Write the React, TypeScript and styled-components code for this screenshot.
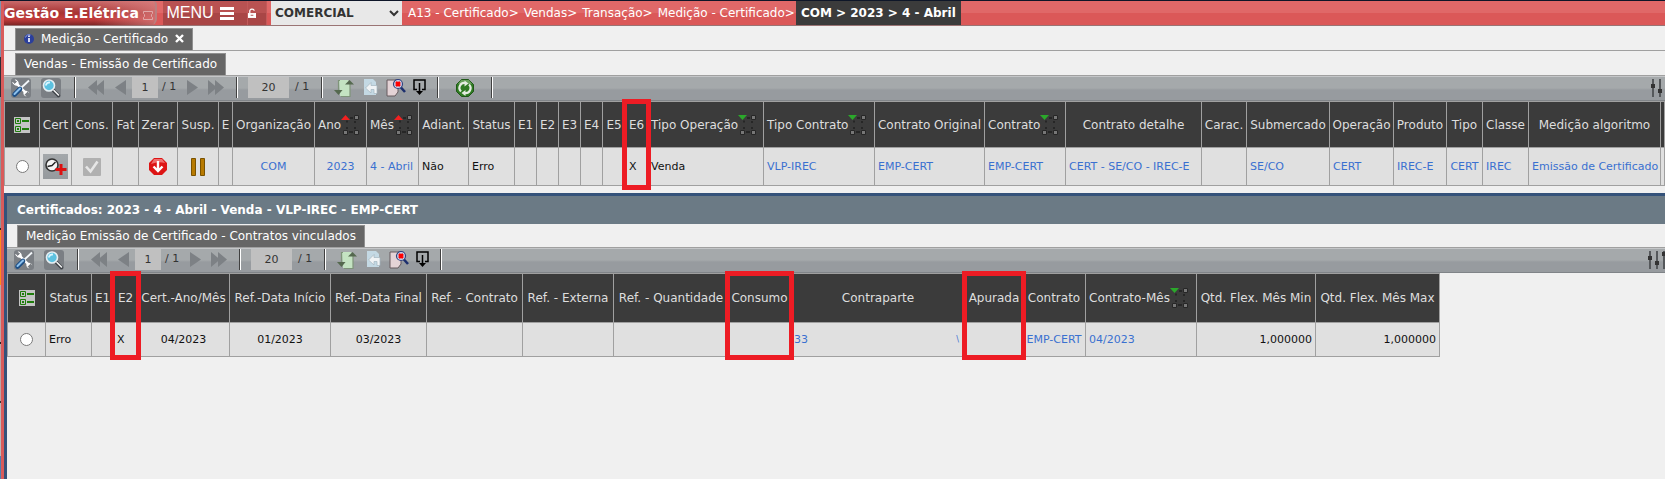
import React from 'react';
import styled, { createGlobalStyle } from 'styled-components';

const GlobalStyle = createGlobalStyle`
  * { box-sizing: border-box; }
  body {
    margin: 0;
    background: #f0f0f0;
    font-family: 'DejaVu Sans', Verdana, sans-serif;
    font-size: 12px;
  }
  button, input, select { font-family: inherit; margin: 0; }
  button { border: 0; padding: 0; background: none; cursor: pointer; }
  a { text-decoration: none; }
`;

const LINE = '#a0a0a0';

const Page = styled.div`
  display: flex;
  min-height: 100vh;
  overflow: hidden;
  border-top: 1px solid #0e1628;
`;

const DesktopEdge = styled.div`
  flex: none;
  width: 1px;
  background: linear-gradient(
    #7f93ad 0 56px, #2c2f36 56px 96px, #8f9499 96px 227px, #222 227px 229px,
    #ff8c1a 229px 284px, #b9a7a7 284px 341px, #222 341px 343px,
    #b9a7a7 343px 400px, #333 400px 402px, #b9b9b9 402px 455px, #4f7fb0 455px
  );
`;

const Frame = styled.div`
  flex: 1;
  min-width: 0;
  display: flex;
  flex-direction: column;
  border-left: 3px solid #d95b5b;
`;

const NavBar = styled.nav`
  display: flex;
  height: 25px;
  background: linear-gradient(#e06868 0 12px, #db5858 12px);
  border-bottom: 1px solid #9a7474;
`;

const Brand = styled.div`
  display: flex;
  align-items: center;
  gap: 4px;
  width: 153px;
  margin-right: 6px;
  color: #fff;
  font-size: 14px;
  font-weight: bold;
  white-space: nowrap;
  border-right: 2px solid #b98080;
  border-radius: 0 4px 6px 0;
  background:
    linear-gradient(90deg, rgba(120, 20, 20, 0) 60%, rgba(220, 130, 130, 0.7)),
    linear-gradient(#c96a6a, #a83232 50%, #c43c3c 75%, #7e2626);
  svg { margin-top: 5px; }
`;

const NavButton = styled.button<{ $width: number }>`
  display: flex;
  align-items: center;
  justify-content: center;
  gap: 6px;
  width: ${(p) => p.$width}px;
  padding-right: 10px;
  color: #fff;
  font-family: 'Liberation Sans', Arial, sans-serif;
  font-size: 16px;
  background: linear-gradient(#b95252 0 12px, #a94646 12px);
  border-right: 1px solid #c25a5a;
`;

const CompanySelect = styled.select`
  width: 131px;
  margin: 0 1px 0 4px;
  border: 0;
  border-radius: 0;
  background: #e8e8e8;
  color: #333;
  font-size: 12px;
  font-weight: bold;
`;

const Crumbs = styled.div`
  display: flex;
  align-items: center;
  gap: 5px;
  padding: 0 1px 0 5px;
  a { color: #fff; white-space: nowrap; }
`;

const CurrentCrumb = styled.span`
  display: flex;
  align-items: center;
  padding: 0 5px;
  color: #fff;
  font-weight: bold;
  white-space: nowrap;
  background: #3b3b3b;
`;

const TabRow = styled.div<{ $height: number; $indent: number; $line?: boolean }>`
  display: flex;
  align-items: flex-end;
  height: ${(p) => p.$height}px;
  padding-left: ${(p) => p.$indent}px;
  border-bottom: ${(p) => (p.$line ? `1px solid ${LINE}` : '0')};
`;

const Tab = styled.button`
  display: flex;
  align-items: center;
  gap: 7px;
  height: 22px;
  padding: 0 8px 2px;
  color: #fff;
  font-size: 12px;
  white-space: nowrap;
  background: #666;
  border: 1px solid #909090;
  border-bottom: 0;
`;

const Bar = styled.div<{ $bleed: number }>`
  display: flex;
  align-items: center;
  height: 26px;
  padding-left: 2px;
  padding-bottom: 1px;
  overflow: hidden;
  border-top: 1px solid ${LINE};
  border-bottom: 1px solid #808488;
  background: linear-gradient(#c4c6c8 0 1px, #a5a9ab 1px 12px, #979b9f 14px);
  > :last-child { margin-left: auto; margin-right: -${(p) => p.$bleed}px; }
`;

const ToolButton = styled.button<{ $width: number }>`
  flex: none;
  display: flex;
  align-items: center;
  justify-content: center;
  width: ${(p) => p.$width}px;
  height: 22px;
`;

const Divider = styled.span`
  flex: none;
  width: 2px;
  height: 21px;
  margin: 0 8px;
  border-left: 1px solid #404040;
  border-right: 1px solid #fff;
`;

const PageInput = styled.input<{ $wide?: boolean }>`
  flex: none;
  width: ${(p) => (p.$wide ? 41 : 26)}px;
  height: 21px;
  margin: 0 ${(p) => (p.$wide ? 2 : 0)}px;
  padding: 0;
  border: 0;
  background: #c0c0c0;
  color: #333;
  font-size: 11px;
  text-align: center;
`;

const Total = styled.span`
  flex: none;
  width: 22px;
  padding-left: 4px;
  padding-bottom: 2px;
  color: #333;
  font-size: 11px;
  white-space: nowrap;
`;

const Grid = styled.table<{ $fill?: boolean }>`
  table-layout: fixed;
  width: ${(p) => (p.$fill ? '100%' : '0')};
  border-spacing: 0;
  border-left: 1px solid ${LINE};
  border-top: 1px solid ${LINE};
`;

type Align = 'left' | 'center' | 'right';

const HeadCell = styled.th<{ $height: number; $align: Align }>`
  position: relative;
  height: ${(p) => p.$height}px;
  padding: 0 ${(p) => (p.$align === 'left' ? 3 : 0)}px;
  background: #3b3b3b;
  color: #dedede;
  font-weight: normal;
  text-align: ${(p) => p.$align};
  white-space: nowrap;
  border-right: 1px solid ${LINE};
  border-bottom: 1px solid ${LINE};
`;

const HeadLabel = styled.span`
  display: inline-flex;
  align-items: center;
  vertical-align: middle;
`;

const Cell = styled.td<{ $height: number; $align: Align; $pad: boolean }>`
  height: ${(p) => p.$height}px;
  padding: 0 ${(p) => (p.$pad ? 3 : 0)}px;
  background: #e0e0e0;
  color: #111;
  font-size: 11px;
  text-align: ${(p) => p.$align};
  white-space: nowrap;
  border-right: 1px solid ${LINE};
  border-bottom: 1px solid ${LINE};
  a { color: #3a70d0; }
  input { display: block; margin: 0 auto; width: 13px; height: 13px; }
  svg, button { display: block; margin: 0 auto; }
`;

const Highlight = styled.span<{ $height: number }>`
  position: absolute;
  z-index: 1;
  top: -3px;
  left: -4px;
  right: -4px;
  height: ${(p) => p.$height}px;
  border: 5px solid #ed1c24;
  pointer-events: none;
`;

const Window = styled.section`
  flex: 1;
  margin-top: 7px;
  border-left: 3px solid #34527a;
  border-top: 3px solid #34527a;
`;

const WindowTitle = styled.h2`
  display: flex;
  align-items: center;
  height: 28px;
  margin: 0;
  padding: 0 10px;
  background: #6b7a85;
  color: #fff;
  font-size: 12px;
`;

const Split = styled.div`
  display: flex;
  align-items: center;
  justify-content: space-between;
`;

const Fragment = styled.a`
  padding-right: 3px;
  font-size: 8px;
`;

const ClockTile = styled.button`
  width: 25px;
  height: 25px;
  background: linear-gradient(#a4a8ab, #95999d);
`;

/* ---------- icons ---------- */

const PinIcon = () => (
  <svg width="10" height="9" viewBox="0 0 10 9" fill="none" stroke="#e0a8a8" aria-hidden="true">
    <path d="M.5.5h9M.5 8.5h9M.5.5v2l1 1v2l-1 1v2M9.500.5v2l-1 1v2l1 1v2" />
  </svg>
);
const MenuIcon = () => (
  <svg width="14" height="13" viewBox="0 0 14 13" fill="#fff" aria-hidden="true">
    <path d="M0 0h14v3H0zM0 5h14v3H0zM0 10h14v3H0z" />
  </svg>
);
const UnlockIcon = () => (
  <svg width="9" height="11" viewBox="0 0 9 11" aria-hidden="true">
    <path d="M2 5V3a2.500 2.200 0 0 1 5-.6" fill="none" stroke="#fff" strokeWidth="1.400" />
    <path d="M0 5h9v5.500H0z" fill="#fff" />
    <path d="M3 7.500h3" stroke="#a94646" />
  </svg>
);
const InfoIcon = () => (
  <svg width="10" height="10" viewBox="0 0 10 10" aria-hidden="true">
    <circle cx="5" cy="5" r="5" fill="#2b3f9c" />
    <path d="M1.500 3.500a4 4 0 0 1 5-2.500" stroke="#8fa0e0" fill="none" />
    <path d="M4.200 1.500h1.600v1.600H4.200zM4.200 4h1.600v4H4.200z" fill="#fff" />
  </svg>
);
const CloseIcon = () => (
  <svg width="9" height="9" viewBox="0 0 9 9" aria-hidden="true">
    <path d="M1 1l7 7M8 1L1 8" stroke="#fff" strokeWidth="2.400" />
  </svg>
);
const ToolsIcon = () => (
  <svg width="20" height="20" viewBox="0 0 20 20" fill="none" aria-hidden="true">
    <rect width="20" height="20" rx="3" fill="#7b7f84" />
    <path d="M5 5l10 10" stroke="#fff" strokeWidth="2.400" />
    <path d="M1.800 4.500l2 2 2.700-2.700-2-2a4 4 0 0 1 2.500 5.200 4 4 0 0 1-5.200-2.500z" fill="#fff" stroke="#fff" />
    <path d="M18.500 15.500l-2-2-3 3 2 2a3.500 3.500 0 0 1-3-4.500 3.500 3.500 0 0 1 6 1.500z" fill="#fff" />
    <path d="M18 2.500l-8 7.500" stroke="#f4f8fb" strokeWidth="1.800" />
    <path d="M9 11l-5.500 5.500" stroke="#1d4f86" strokeWidth="4.600" strokeLinecap="round" />
    <path d="M9 10.500L3.500 16" stroke="#8cc0ec" strokeWidth="2" strokeLinecap="round" />
  </svg>
);
const SearchIcon = () => (
  <svg width="20" height="20" viewBox="0 0 20 20" fill="none" aria-hidden="true">
    <rect width="20" height="20" rx="3" fill="#7b7f84" />
    <path d="M12 12l5.500 5.500" stroke="#3c4045" strokeWidth="3.400" strokeLinecap="round" />
    <path d="M13 12.500l4.500 4.500" stroke="#f2f2f2" strokeWidth="1.600" strokeLinecap="round" />
    <circle cx="8" cy="7.500" r="5.500" fill="#5cc1e0" stroke="#e6eef2" strokeWidth="1.600" />
    <path d="M5 7.500a3.200 3.200 0 0 1 4-3" stroke="#d8f6ff" strokeWidth="2" />
  </svg>
);
const PagerIcon = ({ double, back }: { double?: boolean; back?: boolean }) => {
  const w = double ? 16 : 11;
  return (
    <svg width={w} height="15" viewBox={`0 0 ${w} 15`} fill="#7d8185" aria-hidden="true">
      <g transform={back ? `matrix(-1 0 0 1 ${w} 0)` : undefined}>
        {double ? <path d="M0 0l9 7.500L0 15zM7 0l9 7.500L7 15z" /> : <path d="M0 0l11 7.500L0 15z" />}
      </g>
    </svg>
  );
};
const ImportIcon = () => (
  <svg width="20" height="18" viewBox="0 0 20 18" fill="none" aria-hidden="true">
    <path d="M5 1h9l2 3v13H6z" fill="#c4e3c2" />
    <path d="M6 1.500H4.500V11M16 5v12.500H7" stroke="#7f947a" strokeWidth="1.200" />
    <path d="M0 11h8.500l-4 5z" fill="#55694f" />
    <path d="M11 5.500L15.500 1l4.500 4.500z" fill="#55694f" />
  </svg>
);
const UndoPageIcon = () => (
  <svg width="15" height="17" viewBox="0 0 15 17" aria-hidden="true">
    <path d="M1 0h9l3 3v13H1z" fill="#c4d9e4" />
    <path d="M14 14.500V6.500H8V3.500L2.500 9 8 14v-3.500h3v4z" fill="#f0f3f5" stroke="#a3b4be" strokeWidth=".7" />
  </svg>
);
const ClearFilterIcon = () => (
  <svg width="20" height="18" viewBox="0 0 20 18" fill="none" aria-hidden="true">
    <path d="M1 1h11v12l-3 4H1z" fill="#e4d3d6" stroke="#665a5e" />
    <path d="M14.500 8l4.500 5" stroke="#1d2f6e" strokeWidth="2.600" />
    <circle cx="12" cy="5" r="4.500" fill="#cdd4ee" stroke="#34447e" strokeWidth="1.200" />
    <path d="M10 3l4 4M14 3l-4 4" stroke="#f00" strokeWidth="2.600" />
  </svg>
);
const DownloadIcon = () => (
  <svg width="13" height="17" viewBox="0 0 13 17" fill="none" stroke="#000" aria-hidden="true">
    <path d="M4 10.500H1V1h11v9.500H9" strokeWidth="1.500" />
    <path d="M6.500 4v10" strokeWidth="1.500" />
    <path d="M3 12h7l-3.500 4z" fill="#000" stroke="none" />
  </svg>
);
const RefreshIcon = () => (
  <svg width="18" height="18" viewBox="0 0 18 18" fill="none" aria-hidden="true">
    <path d="M5.500.5h7l5 5v7l-5 5h-7l-5-5v-7z" fill="#2f7a22" stroke="#1f5717" />
    <path d="M5 1h8l3 4H2z" fill="#7fb070" opacity=".7" />
    <path d="M5 12.500A5 5 0 0 1 9.500 4M13 5.500A5 5 0 0 1 8.500 14" stroke="#e4ece0" strokeWidth="2.200" />
    <path d="M8.500 1.500l4 3-4 3zM9.500 11l-4 3 4 3z" fill="#e4ece0" />
  </svg>
);
const SlidersIcon = () => (
  <svg width="20" height="18" viewBox="0 0 20 18" aria-hidden="true">
    <path d="M2 0v18M9 0v18M16 0v18" stroke="#55585b" strokeWidth="2" />
    <path d="M0 5h4v4H0zM7 10h4v4H7zM14 1h4v4h-4z" fill="#333" />
  </svg>
);
const ChecklistIcon = () => (
  <svg width="16" height="16" viewBox="0 0 16 16" aria-hidden="true">
    <path d="M0 0h16v16H0z" fill="#c4c4c4" />
    <path d="M1.500 1.500h5v5h-5zM1.500 9.500h5v5h-5z" fill="none" stroke="#1f7d0c" />
    <path d="M3 3h2v2H3zM3 11h2v2H3zM8 3h7v2H8zM8 11h7v2H8z" fill="#1f7d0c" />
  </svg>
);
const SortIcon = ({ up }: { up?: boolean }) => (
  <svg width="19" height="22" viewBox="0 0 19 22" aria-hidden="true">
    <path d="M9 4h3M5 7.500h2M13 8h2M5 14h2M13 14h2M8 18h4" stroke="#262626" strokeWidth="2" />
    <g fill="#777" stroke="#262626">
      <path d="M13.500 1.500h4v4h-4zM2.500 16.500h4v4h-4zM13.500 16.500h4v4h-4z" />
    </g>
    {up ? <path d="M0 6l4.500-5L9 6z" fill="#f32020" /> : <path d="M0 1h9L4.500 6z" fill="#2ba82b" />}
  </svg>
);
const ClockIcon = () => (
  <svg width="25" height="25" viewBox="0 0 25 25" fill="none" aria-hidden="true">
    <circle cx="9" cy="11" r="6" fill="#f4f4f4" stroke="#333" strokeWidth="1.600" />
    <path d="M4.500 12.500L9 11.500l3.500-3.500" stroke="#222" strokeWidth="1.400" />
    <path d="M18 10v11M12.500 15.500h11" stroke="#dc1010" strokeWidth="3" />
  </svg>
);
const CheckIcon = () => (
  <svg width="18" height="18" viewBox="0 0 18 18" fill="none" aria-hidden="true">
    <rect width="18" height="18" rx="1" fill="#b0b0b0" />
    <path d="M3 8.500l4.500 5 7-10" stroke="#e6e6e6" strokeWidth="2.600" />
  </svg>
);
const StopIcon = () => (
  <svg width="18" height="17" viewBox="0 0 18 17" fill="none" aria-hidden="true">
    <path d="M5 0h8l5 5v7l-5 5H5l-5-5V5z" fill="#dd1515" />
    <path d="M5 1h8l3 4q-7-2-14 1z" fill="#f07070" />
    <path d="M9 3v10M4.500 8.500L9 13l4.500-4.500" stroke="#fff" strokeWidth="2.400" />
  </svg>
);
const PauseIcon = () => (
  <svg width="14" height="18" viewBox="0 0 14 18" fill="#b87a00" stroke="#7a5200" aria-hidden="true">
    <path d="M.5.5h4v17h-4zM9.500.5h4v17h-4z" />
  </svg>
);

/* ---------- toolbar ---------- */

function Toolbar({ refresh, bleed }: { refresh?: boolean; bleed: number }) {
  return (
    <Bar $bleed={bleed} role="toolbar">
      <ToolButton $width={30} aria-label="Ferramentas"><ToolsIcon /></ToolButton>
      <ToolButton $width={30} aria-label="Pesquisar"><SearchIcon /></ToolButton>
      <Divider />
      <ToolButton $width={24} aria-label="Primeira página"><PagerIcon double back /></ToolButton>
      <ToolButton $width={24} aria-label="Página anterior"><PagerIcon back /></ToolButton>
      <PageInput aria-label="Página" defaultValue="1" />
      <Total>/ 1</Total>
      <ToolButton $width={24} aria-label="Próxima página"><PagerIcon /></ToolButton>
      <ToolButton $width={24} aria-label="Última página"><PagerIcon double /></ToolButton>
      <Divider />
      <PageInput $wide aria-label="Linhas por página" defaultValue="20" />
      <Total>/ 1</Total>
      <Divider />
      <ToolButton $width={26} aria-label="Importar"><ImportIcon /></ToolButton>
      <ToolButton $width={26} aria-label="Desfazer"><UndoPageIcon /></ToolButton>
      <ToolButton $width={26} aria-label="Limpar filtro"><ClearFilterIcon /></ToolButton>
      <ToolButton $width={20} aria-label="Exportar"><DownloadIcon /></ToolButton>
      <Divider />
      {refresh && (
        <>
          <ToolButton $width={36} aria-label="Atualizar"><RefreshIcon /></ToolButton>
          <Divider />
        </>
      )}
      <ToolButton $width={20} aria-label="Configurar colunas"><SlidersIcon /></ToolButton>
    </Bar>
  );
}

/* ---------- data grid ---------- */

interface Column {
  label?: string;
  width?: number;
  value?: React.ReactNode;
  link?: boolean;
  align?: Align;
  sort?: 'up' | 'down';
  mark?: boolean;
}

interface GridProps {
  columns: Column[];
  headHeight: number;
  rowHeight: number;
  markHeight: number;
  fill?: boolean;
}

function DataGrid({ columns, headHeight, rowHeight, markHeight, fill }: GridProps) {
  return (
    <Grid $fill={fill}>
      <colgroup>
        {columns.map((c, i) => <col key={i} width={c.width} />)}
      </colgroup>
      <thead>
        <tr>
          {columns.map((c, i) => (
            <HeadCell key={i} $height={headHeight} $align={c.sort ? 'left' : 'center'}>
              <HeadLabel>
                {c.label ?? (i === 0 && <ChecklistIcon />)}
                {c.sort && <SortIcon up={c.sort === 'up'} />}
              </HeadLabel>
              {c.mark && <Highlight $height={markHeight} />}
            </HeadCell>
          ))}
        </tr>
      </thead>
      <tbody>
        <tr>
          {columns.map((c, i) => (
            <Cell key={i} $height={rowHeight} $align={c.align ?? 'left'} $pad={c.align !== 'center'}>
              {c.link ? <a href="#registro">{c.value}</a> : c.value}
            </Cell>
          ))}
        </tr>
      </tbody>
    </Grid>
  );
}

const salesColumns: Column[] = [
  { width: 35, value: <input type="radio" name="venda" aria-label="Selecionar venda" /> },
  { label: 'Cert', width: 32, align: 'center', value: <ClockTile aria-label="Agendar certificado"><ClockIcon /></ClockTile> },
  { label: 'Cons.', width: 41, align: 'center', value: <CheckIcon /> },
  { label: 'Fat', width: 26 },
  { label: 'Zerar', width: 39, align: 'center', value: <StopIcon /> },
  { label: 'Susp.', width: 41, align: 'center', value: <PauseIcon /> },
  { label: 'E', width: 14 },
  { label: 'Organização', width: 82, value: 'COM', link: true, align: 'center' },
  { label: 'Ano', width: 52, value: '2023', link: true, align: 'center', sort: 'up' },
  { label: 'Mês', width: 52, value: '4 - Abril', link: true, sort: 'up' },
  { label: 'Adiant.', width: 50, value: 'Não' },
  { label: 'Status', width: 46, value: 'Erro' },
  { label: 'E1', width: 22 },
  { label: 'E2', width: 22 },
  { label: 'E3', width: 22 },
  { label: 'E4', width: 22 },
  { label: 'E5', width: 23 },
  { label: 'E6', width: 22, value: 'X', mark: true },
  { label: 'Tipo Operação', width: 116, value: 'Venda', sort: 'down' },
  { label: 'Tipo Contrato', width: 111, value: 'VLP-IREC', link: true, sort: 'down' },
  { label: 'Contrato Original', width: 110, value: 'EMP-CERT', link: true },
  { label: 'Contrato', width: 81, value: 'EMP-CERT', link: true, sort: 'down' },
  { label: 'Contrato detalhe', width: 136, value: 'CERT - SE/CO - IREC-E', link: true },
  { label: 'Carac.', width: 45 },
  { label: 'Submercado', width: 83, value: 'SE/CO', link: true },
  { label: 'Operação', width: 64, value: 'CERT', link: true },
  { label: 'Produto', width: 53, value: 'IREC-E', link: true },
  { label: 'Tipo', width: 36, value: 'CERT', link: true, align: 'center' },
  { label: 'Classe', width: 46, value: 'IREC', link: true },
  { label: 'Medição algoritmo', width: 132, value: 'Emissão de Certificado', link: true },
  {},
];

const contractColumns: Column[] = [
  { width: 38, value: <input type="radio" name="contrato" aria-label="Selecionar contrato" /> },
  { label: 'Status', width: 46, value: 'Erro' },
  { label: 'E1', width: 22 },
  { label: 'E2', width: 24, value: 'X', mark: true },
  { label: 'Cert.-Ano/Mês', width: 92, value: '04/2023', align: 'center' },
  { label: 'Ref.-Data Início', width: 101, value: '01/2023', align: 'center' },
  { label: 'Ref.-Data Final', width: 96, value: '03/2023', align: 'center' },
  { label: 'Ref. - Contrato', width: 96 },
  { label: 'Ref. - Externa', width: 91 },
  { label: 'Ref. - Quantidade', width: 115 },
  { label: 'Consumo', width: 62, mark: true },
  {
    label: 'Contraparte',
    width: 175,
    value: <Split><a href="#contraparte">33</a><Fragment href="#contraparte">\</Fragment></Split>,
  },
  { label: 'Apurada', width: 57, mark: true },
  { label: 'Contrato', width: 63, value: 'EMP-CERT', link: true, align: 'center' },
  { label: 'Contrato-Mês', width: 111, value: '04/2023', link: true, sort: 'down' },
  { label: 'Qtd. Flex. Mês Min', width: 119, value: '1,000000', align: 'right' },
  { label: 'Qtd. Flex. Mês Max', width: 124, value: '1,000000', align: 'right' },
];

export default function App() {
  return (
    <Page>
      <GlobalStyle />
      <DesktopEdge />
      <Frame>
        <NavBar>
          <Brand>Gestão E.Elétrica<PinIcon /></Brand>
          <NavButton $width={85}>MENU<MenuIcon /></NavButton>
          <NavButton $width={19} aria-label="Desbloquear"><UnlockIcon /></NavButton>
          <CompanySelect aria-label="Empresa" defaultValue="COMERCIAL">
            <option>COMERCIAL</option>
          </CompanySelect>
          <Crumbs>
            <a href="#a13">A13 - Certificado&gt;</a>
            <a href="#vendas">Vendas&gt;</a>
            <a href="#transacao">Transação&gt;</a>
            <a href="#medicao">Medição - Certificado&gt;</a>
          </Crumbs>
          <CurrentCrumb>COM &gt; 2023 &gt; 4 - Abril</CurrentCrumb>
        </NavBar>
        <TabRow $height={25} $indent={11} $line>
          <Tab><InfoIcon />Medição - Certificado<CloseIcon /></Tab>
        </TabRow>
        <TabRow $height={24} $indent={11}>
          <Tab>Vendas - Emissão de Certificado</Tab>
        </TabRow>
        <Toolbar refresh bleed={6} />
        <DataGrid columns={salesColumns} headHeight={46} rowHeight={38} markHeight={91} fill />
        <Window>
          <WindowTitle>Certificados: 2023 - 4 - Abril - Venda - VLP-IREC - EMP-CERT</WindowTitle>
          <TabRow $height={23} $indent={10}>
            <Tab>Medição Emissão de Certificado - Contratos vinculados</Tab>
          </TabRow>
          <Toolbar bleed={3} />
          <DataGrid columns={contractColumns} headHeight={49} rowHeight={34} markHeight={89} />
        </Window>
      </Frame>
    </Page>
  );
}
